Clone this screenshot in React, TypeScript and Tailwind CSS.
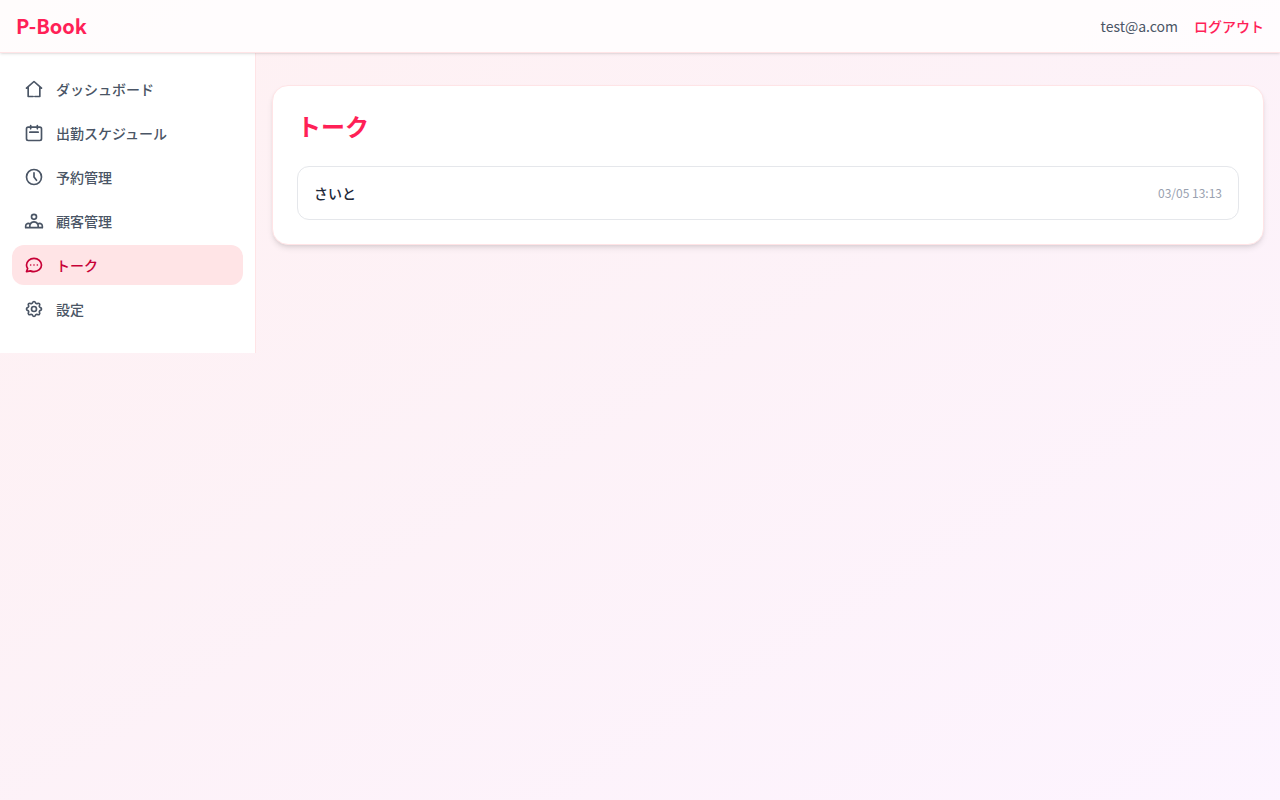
import type { ReactNode } from "react";

interface NavItem {
  label: string;
  href: string;
  icon: ReactNode;
}

interface Talk {
  id: number;
  name: string;
  lastMessageAt: string;
}

const navItems: NavItem[] = [
  {
    label: "ダッシュボード",
    href: "#dashboard",
    icon: <path d="M3 11l9-8 9 8M5 10v11h6M19 10v11h-6" />,
  },
  {
    label: "出勤スケジュール",
    href: "#schedule",
    icon: (
      <path d="M8 7V3m8 4V3m-9 8h10M5 21h14a2 2 0 002-2V7a2 2 0 00-2-2H5a2 2 0 00-2 2v12a2 2 0 002 2z" />
    ),
  },
  {
    label: "予約管理",
    href: "#reservations",
    icon: <path d="M12 7v5l3 4m6-4a9 9 0 11-18 0 9 9 0 0118 0z" />,
  },
  {
    label: "顧客管理",
    href: "#customers",
    icon: (
      <path d="M17 20h5v-2a3 3 0 00-5.356-1.857M17 20H7m10 0v-2c0-.656-.126-1.283-.356-1.857M7 20H2v-2a3 3 0 015.356-1.857M7 20v-2c0-.656.126-1.283.356-1.857m0 0a5.002 5.002 0 019.288 0M15 7a3 3 0 11-6 0 3 3 0 016 0z" />
    ),
  },
  {
    label: "トーク",
    href: "#talk",
    icon: (
      <path d="M8 12h.01M12 12h.01M16 12h.01M21 12c0 4.418-4.03 8-9 8a9.863 9.863 0 01-4.255-.949L3 20l1.395-3.72C3.512 15.042 3 13.574 3 12c0-4.418 4.03-8 9-8s9 3.582 9 8z" />
    ),
  },
  {
    label: "設定",
    href: "#settings",
    icon: (
      <>
        <path d="M10.325 4.317c.426-1.756 2.924-1.756 3.35 0a1.724 1.724 0 002.573 1.066c1.543-.94 3.31.826 2.37 2.37a1.724 1.724 0 001.065 2.572c1.756.426 1.756 2.924 0 3.35a1.724 1.724 0 00-1.066 2.573c.94 1.543-.826 3.31-2.37 2.37a1.724 1.724 0 00-2.572 1.065c-.426 1.756-2.924 1.756-3.35 0a1.724 1.724 0 00-2.573-1.066c-1.543.94-3.31-.826-2.37-2.37a1.724 1.724 0 00-1.065-2.572c-1.756-.426-1.756-2.924 0-3.35a1.724 1.724 0 001.066-2.573c-.94-1.543.826-3.31 2.37-2.37.996.608 2.296.07 2.572-1.065z" />
        <path d="M15 12a3 3 0 11-6 0 3 3 0 016 0z" />
      </>
    ),
  },
];

const talks: Talk[] = [{ id: 1, name: "さいと", lastMessageAt: "03/05 13:13" }];

function Header() {
  return (
    <header className="relative z-10 border-b border-rose-100 bg-white/80 shadow-sm">
      <div className="flex items-center justify-between px-4 py-3">
        <a href="#dashboard" className="text-xl font-bold text-rose-500">
          P-Book
        </a>
        <div className="flex items-center gap-4 text-sm">
          <span className="text-gray-600">test@a.com</span>
          <button type="button" className="font-medium text-rose-500 hover:text-rose-600">
            ログアウト
          </button>
        </div>
      </div>
    </header>
  );
}

function Sidebar({ current }: { current: string }) {
  return (
    <aside className="w-64 shrink-0 border-r border-rose-100 bg-white">
      <nav className="flex flex-col gap-1 px-3 pt-4 pb-6">
        {navItems.map((item) => (
          <a
            key={item.href}
            href={item.href}
            aria-current={item.href === current ? "page" : undefined}
            className={`${
              item.href === current
                ? "bg-rose-100 text-rose-700"
                : "text-gray-600 hover:bg-rose-50"
            } flex items-center gap-3 rounded-xl px-3 py-2.5 text-sm font-medium`}
          >
            <svg
              className="h-5 w-5 shrink-0"
              fill="none"
              viewBox="0 0 24 24"
              stroke="currentColor"
              strokeWidth={2}
              strokeLinecap="round"
              strokeLinejoin="round"
              aria-hidden="true"
            >
              {item.icon}
            </svg>
            {item.label}
          </a>
        ))}
      </nav>
    </aside>
  );
}

function App() {
  return (
    <div className="min-h-screen bg-linear-to-br from-rose-50 via-pink-50 to-fuchsia-50 font-['Noto_Sans_CJK_JP',sans-serif]">
      <Header />

      <div className="flex items-start">
        <Sidebar current="#talk" />

        {/* Main Content */}
        <main className="min-w-0 flex-1 px-4 py-8">
          <div className="rounded-2xl border border-rose-100 bg-white p-6 shadow-md">
            <h1 className="mb-6 text-2xl font-bold text-rose-500">トーク</h1>
            <ul className="space-y-3">
              {talks.map((talk) => (
                <li key={talk.id}>
                  <a
                    href={`#talk-${talk.id}`}
                    className="flex items-center justify-between rounded-xl border border-gray-200 p-4 hover:bg-rose-50"
                  >
                    <span className="text-sm font-medium text-gray-800">{talk.name}</span>
                    <time className="text-xs text-gray-400">{talk.lastMessageAt}</time>
                  </a>
                </li>
              ))}
            </ul>
          </div>
        </main>
      </div>
    </div>
  );
}

export default App;
